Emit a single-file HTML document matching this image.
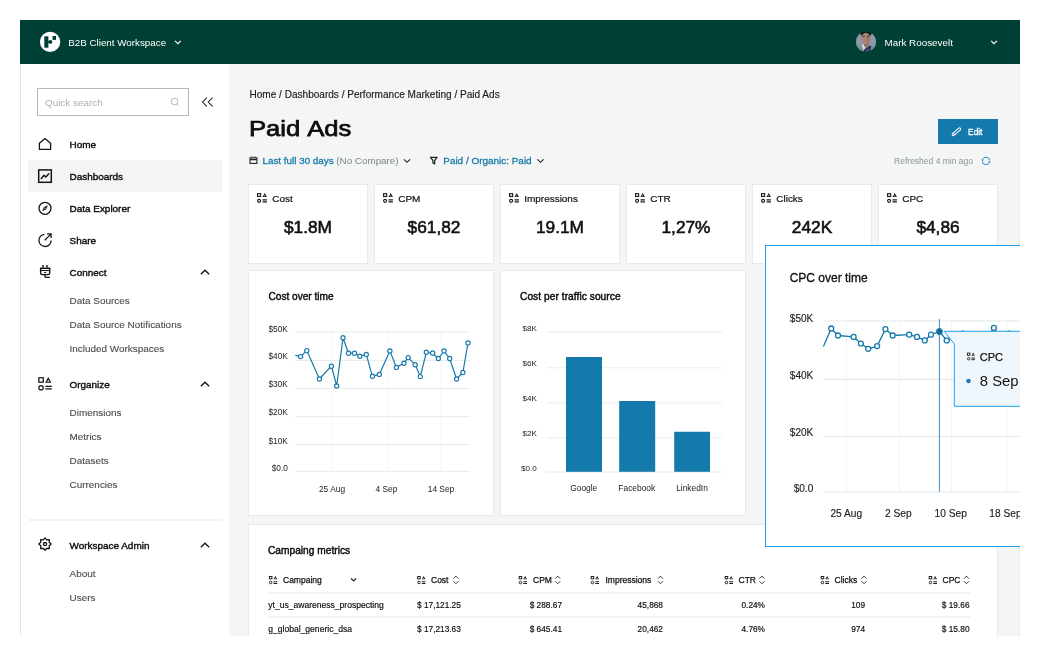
<!DOCTYPE html>
<html lang="en">
<head>
<meta charset="utf-8">
<title>Paid Ads – B2B Client Workspace</title>
<style>
html,body{margin:0;padding:0;background:#fff;}
body{width:1040px;height:656px;position:relative;overflow:hidden;font-family:"Liberation Sans",sans-serif;}
#app{position:absolute;left:0;top:0;width:1020px;height:636px;overflow:hidden;will-change:transform;}
.b{position:absolute;box-sizing:border-box;}
.t{position:absolute;white-space:pre;line-height:20px;height:20px;}
.card{position:absolute;box-sizing:border-box;background:#fff;border:1px solid #e7ebeb;}
svg{position:absolute;overflow:visible;}
</style>
</head>
<body>
<div id="app">
<!-- backgrounds -->
<div class="b" style="left:20px;top:64px;width:1000px;height:572px;background:#f4f6f6;border-right:1px solid #e8ebeb"></div>
<div class="b" style="left:20px;top:20px;width:1000px;height:44px;background:#003f33"></div>
<div class="b" style="left:20px;top:64px;width:209px;height:572px;background:#fff;border-left:1px solid #e3e7e7"></div>

<!-- header logo + avatar -->
<svg style="left:0;top:0" width="1040" height="656" viewBox="0 0 1040 656">
  <defs>
    <g id="mi" fill="none" stroke="currentColor" stroke-width="1.15">
      <rect x="0.58" y="0.58" width="3.05" height="2.8"/>
      <path d="M7.7 0 L9.95 3.95 H5.45 Z M7.7 2.05 L8.5 3.2 H6.9 Z" fill="currentColor" fill-rule="evenodd" stroke="none"/>
      <circle cx="2.1" cy="7.75" r="1.5"/>
      <path d="M5.5 6.75 H9.9 M5.5 8.85 H9.9" stroke-width="1.25"/>
    </g>
    <g id="sort" fill="none" stroke="currentColor" stroke-width="0.9">
      <path d="M0.2 3.4 L2.7 0.9 L5.2 3.4 M0.2 6 L2.7 8.5 L5.2 6"/>
    </g>
    <clipPath id="avc"><circle cx="866" cy="41.75" r="10.1"/></clipPath>
    <filter id="avb" x="-20%" y="-20%" width="140%" height="140%"><feGaussianBlur stdDeviation="0.45"/></filter>
  </defs>
  <!-- logo -->
  <circle cx="50.1" cy="41.85" r="10.2" fill="#fff"/>
  <rect x="44.3" y="36.3" width="4.1" height="11.4" fill="#003f33"/>
  <rect x="52.5" y="36" width="3.5" height="3.9" fill="#003f33"/>
  <rect x="48" y="41" width="1.6" height="1.7" fill="#003f33"/>
  <circle cx="50.4" cy="41.9" r="1.9" fill="#003f33"/>
  <path d="M175 40.9 L177.9 43.7 L180.8 40.9" fill="none" stroke="#fff" stroke-width="1.15"/>
  <!-- avatar -->
  <g clip-path="url(#avc)">
    <g filter="url(#avb)">
    <rect x="854" y="30" width="24" height="24" fill="#8c99aa"/>
    <ellipse cx="866" cy="33.6" rx="5.6" ry="3.4" fill="#10181a"/>
    <rect x="864" y="42" width="4.2" height="4.5" fill="#8c6a5c"/>
    <ellipse cx="865.9" cy="38.6" rx="4.5" ry="5.9" fill="#a9846f"/>
    <ellipse cx="868.6" cy="39.5" rx="1.6" ry="4" fill="#8f6c5b" opacity="0.55"/>
    <ellipse cx="863.7" cy="36.4" rx="1.2" ry="0.55" fill="#4b3a35"/>
    <ellipse cx="867.9" cy="36.4" rx="1.2" ry="0.55" fill="#4b3a35"/>
    <ellipse cx="866.4" cy="41.7" rx="0.9" ry="0.5" fill="#c9737c"/>
    <path d="M854 54 L856.5 47.5 L862 44.6 L866 50 L870.6 44.6 L875.8 47.5 L878 54 Z" fill="#858e99"/>
    <path d="M861.6 45 L863.6 44.2 L865.4 48.5 L863.5 50 Z" fill="#d4dde7"/>
    <path d="M864.2 49.5 L870.3 45.2 L871.2 47 L870 54 L863.6 54 Z" fill="#26314c"/>
    <path d="M866 51.5 L870 48" stroke="#dfe6ee" stroke-width="0.8" stroke-dasharray="0.9 0.9" fill="none"/>
    </g>
  </g>
  <path d="M991.1 40.9 L994 43.7 L996.9 40.9" fill="none" stroke="#fff" stroke-width="1.15"/>

  <!-- sidebar: search -->
  <rect x="37.5" y="88.5" width="151" height="27" fill="#fff" stroke="#b5b8b8" stroke-width="1"/>
  <circle cx="174.5" cy="101.5" r="3.3" fill="none" stroke="#b3b8b8" stroke-width="1"/>
  <path d="M176.9 104 L178.6 105.8" stroke="#b3b8b8" stroke-width="1" fill="none"/>
  <path d="M206.9 97.6 L202.5 102 L206.9 106.4 M212.6 97.6 L208.2 102 L212.6 106.4" fill="none" stroke="#222" stroke-width="1.05"/>

  <!-- active item bg -->
  <rect x="28" y="160" width="194" height="32" fill="#f3f5f5"/>

  <!-- nav icons -->
  <g fill="none" stroke="#151515" stroke-width="1.3" stroke-linejoin="round" stroke-linecap="round">
    <!-- home -->
    <path d="M39.4 143.2 L45 138.6 L50.6 143.2 V149.4 H39.4 Z"/>
    <!-- dashboards -->
    <rect x="38.7" y="169.9" width="12.6" height="12.4" stroke-linejoin="miter" stroke-width="1.5"/>
    <path d="M41.3 178.4 L44 175.3 L45.8 177 L48.8 173.8" stroke-width="1.5"/>
    <!-- data explorer -->
    <circle cx="45" cy="208.3" r="6"/>
    <path d="M47.5 205.8 L46 209.2 L42.5 210.8 L44 207.4 Z" fill="#151515" stroke-width="0.4"/>
    <circle cx="45" cy="208.3" r="0.55" fill="#fff" stroke="none"/>
    <!-- share -->
    <path d="M51.1 240.5 A6.1 6.1 0 1 1 44.4 234.33" stroke-linecap="butt"/>
    <path d="M44.7 240.3 L50.9 234.1 M47 233.95 H51.05 V238" stroke-linecap="butt" stroke-linejoin="miter"/>
    <!-- connect (plug) -->
    <g stroke-linecap="butt" stroke-width="1.4"><path d="M43 267.6 V265 M47 267.6 V265"/>
    <path d="M40.6 268.2 H49.7 V272.9 Q49.7 274.6 48 274.6 H42.3 Q40.6 274.6 40.6 272.9 Z"/>
    <path d="M40.6 270.5 H49.7" stroke-width="1.1"/><path d="M44 272.6 H46.2" stroke-width="1"/>
    <path d="M45 275 V276.2 Q45 277.4 46.2 277.4 H49.8"/></g>
    <!-- organize -->
    <g stroke-width="1.25"><rect x="38.85" y="377.75" width="4.4" height="4.4" stroke-linejoin="miter"/>
    <path d="M48.25 377.1 L51.35 382.8 H45.15 Z M48.25 379.8 L49.45 381.7 H47.05 Z" fill="#151515" fill-rule="evenodd" stroke="none"/>
    <circle cx="41.05" cy="387.7" r="2.2"/>
    <path d="M45.3 386.4 H51.8 M45.3 388.9 H51.8" stroke-linecap="butt" stroke-width="1.25"/></g>
    <!-- gear -->
    <path d="M45.00 537.90 L46.74 539.90 L49.38 539.72 L49.20 542.36 L51.20 544.10 L49.20 545.84 L49.38 548.48 L46.74 548.30 L45.00 550.30 L43.26 548.30 L40.62 548.48 L40.80 545.84 L38.80 544.10 L40.80 542.36 L40.62 539.72 L43.26 539.90 Z" stroke-width="1.3"/>
    <circle cx="45" cy="544.1" r="1.6" stroke-width="1.3"/>
    <!-- chevrons up -->
    <path d="M200.8 274.3 L205 270.2 L209.2 274.3 M200.8 386.3 L205 382.2 L209.2 386.3 M200.8 547.3 L205 543.2 L209.2 547.3" stroke-linecap="butt" stroke-linejoin="miter"/>
  </g>
  <rect x="28" y="519.5" width="194" height="1" fill="#e6e9e9"/>
</svg>

<div class="card" style="left:248px;top:184px;width:120px;height:80px"></div>
<div class="card" style="left:374px;top:184px;width:120px;height:80px"></div>
<div class="card" style="left:500px;top:184px;width:120px;height:80px"></div>
<div class="card" style="left:626px;top:184px;width:120px;height:80px"></div>
<div class="card" style="left:752px;top:184px;width:120px;height:80px"></div>
<div class="card" style="left:878px;top:184px;width:120px;height:80px"></div>
<div class="card" style="left:248px;top:270px;width:246px;height:246px"></div>
<div class="card" style="left:500px;top:270px;width:246px;height:246px"></div>
<div class="card" style="left:248px;top:524px;width:750px;height:140px"></div>
<div class="b" style="left:938px;top:119px;width:60px;height:25px;background:#1579ab"></div>
<svg style="left:0;top:0" width="1040" height="656" viewBox="0 0 1040 656">
<g transform="translate(956.45 131.75) rotate(-42)" fill="none" stroke="#fff" stroke-width="0.95"><rect x="-5.3" y="-1.2" width="10.6" height="2.4" rx="1.1"/><path d="M-3.3 -1.2 V1.2"/></g>
<g fill="none" stroke="#1a7fb5" stroke-width="0.95"><path d="M982.5 159.6 A3.8 3.8 0 0 1 989.8 160.6 M989.5 162.3 A3.8 3.8 0 0 1 982.2 161.3"/><path d="M981.5 159.2 L982.35 160.6 L983.8 160 M990.5 162.7 L989.65 161.3 L988.2 161.9" stroke-width="0.7"/></g>
<g fill="none" stroke="#222" stroke-width="1.1"><rect x="250" y="157.9" width="6.9" height="5.5"/><path d="M250 159.6 H256.9 M251.9 156.4 V158 M255 156.4 V158"/></g>
<path d="M403.9 159.3 L407 162.3 L410.1 159.3 M537.4 159.3 L540.5 162.3 L543.6 159.3" fill="none" stroke="#222" stroke-width="1.15"/>
<path d="M430.5 157.3 H437.1 L434.7 160.4 V163.9 L432.9 163 V160.4 Z" fill="none" stroke="#222" stroke-width="1.25" stroke-linejoin="round"/>
<use href="#mi" x="257" y="193.1" style="color:#1c1c1c"/>
<use href="#mi" x="383" y="193.1" style="color:#1c1c1c"/>
<use href="#mi" x="509" y="193.1" style="color:#1c1c1c"/>
<use href="#mi" x="635" y="193.1" style="color:#1c1c1c"/>
<use href="#mi" x="761" y="193.1" style="color:#1c1c1c"/>
<use href="#mi" x="887" y="193.1" style="color:#1c1c1c"/>
<rect x="295" y="331.5" width="175" height="1" fill="#e7ebeb"/>
<rect x="295" y="359.9" width="175" height="1" fill="#e7ebeb"/>
<rect x="295" y="387.9" width="175" height="1" fill="#e7ebeb"/>
<rect x="295" y="416.1" width="175" height="1" fill="#e7ebeb"/>
<rect x="295" y="443.9" width="175" height="1" fill="#e7ebeb"/>
<rect x="295" y="470.9" width="175" height="1" fill="#e7ebeb"/>
<path d="M332 333 V471" stroke="#e9eded" stroke-width="1" stroke-dasharray="1 1" fill="none"/>
<path d="M387.3 333 V471" stroke="#e9eded" stroke-width="1" stroke-dasharray="1 1" fill="none"/>
<path d="M441 333 V471" stroke="#e9eded" stroke-width="1" stroke-dasharray="1 1" fill="none"/>
<polyline points="295.3,355.4 300.6,356.6 306.8,350.6 319.4,379.0 331.4,366.2 336.7,386.0 343.0,337.8 348.5,353.2 354.5,353.2 359.8,356.3 366.3,354.4 372.4,376.3 379.3,374.4 389.9,351.0 396.4,367.4 403.9,363.3 408.2,357.6 415.2,364.8 420.3,376.6 426.3,352.3 432.6,353.0 438.3,358.5 444.1,351.0 449.7,358.5 456.6,379.0 462.9,372.5 468.0,342.9" fill="none" stroke="#1879ab" stroke-width="1.2" stroke-linejoin="round"/>
<circle cx="300.6" cy="356.6" r="2.1" fill="#fff" stroke="#1879ab" stroke-width="1.15"/>
<circle cx="306.8" cy="350.6" r="2.1" fill="#fff" stroke="#1879ab" stroke-width="1.15"/>
<circle cx="319.4" cy="379.0" r="2.1" fill="#fff" stroke="#1879ab" stroke-width="1.15"/>
<circle cx="331.4" cy="366.2" r="2.1" fill="#fff" stroke="#1879ab" stroke-width="1.15"/>
<circle cx="336.7" cy="386.0" r="2.1" fill="#fff" stroke="#1879ab" stroke-width="1.15"/>
<circle cx="343.0" cy="337.8" r="2.1" fill="#fff" stroke="#1879ab" stroke-width="1.15"/>
<circle cx="348.5" cy="353.2" r="2.1" fill="#fff" stroke="#1879ab" stroke-width="1.15"/>
<circle cx="354.5" cy="353.2" r="2.1" fill="#fff" stroke="#1879ab" stroke-width="1.15"/>
<circle cx="359.8" cy="356.3" r="2.1" fill="#fff" stroke="#1879ab" stroke-width="1.15"/>
<circle cx="366.3" cy="354.4" r="2.1" fill="#fff" stroke="#1879ab" stroke-width="1.15"/>
<circle cx="372.4" cy="376.3" r="2.1" fill="#fff" stroke="#1879ab" stroke-width="1.15"/>
<circle cx="379.3" cy="374.4" r="2.1" fill="#fff" stroke="#1879ab" stroke-width="1.15"/>
<circle cx="389.9" cy="351.0" r="2.1" fill="#fff" stroke="#1879ab" stroke-width="1.15"/>
<circle cx="396.4" cy="367.4" r="2.1" fill="#fff" stroke="#1879ab" stroke-width="1.15"/>
<circle cx="403.9" cy="363.3" r="2.1" fill="#fff" stroke="#1879ab" stroke-width="1.15"/>
<circle cx="408.2" cy="357.6" r="2.1" fill="#fff" stroke="#1879ab" stroke-width="1.15"/>
<circle cx="415.2" cy="364.8" r="2.1" fill="#fff" stroke="#1879ab" stroke-width="1.15"/>
<circle cx="420.3" cy="376.6" r="2.1" fill="#fff" stroke="#1879ab" stroke-width="1.15"/>
<circle cx="426.3" cy="352.3" r="2.1" fill="#fff" stroke="#1879ab" stroke-width="1.15"/>
<circle cx="432.6" cy="353.0" r="2.1" fill="#fff" stroke="#1879ab" stroke-width="1.15"/>
<circle cx="438.3" cy="358.5" r="2.1" fill="#fff" stroke="#1879ab" stroke-width="1.15"/>
<circle cx="444.1" cy="351.0" r="2.1" fill="#fff" stroke="#1879ab" stroke-width="1.15"/>
<circle cx="449.7" cy="358.5" r="2.1" fill="#fff" stroke="#1879ab" stroke-width="1.15"/>
<circle cx="456.6" cy="379.0" r="2.1" fill="#fff" stroke="#1879ab" stroke-width="1.15"/>
<circle cx="462.9" cy="372.5" r="2.1" fill="#fff" stroke="#1879ab" stroke-width="1.15"/>
<circle cx="468.0" cy="342.9" r="2.1" fill="#fff" stroke="#1879ab" stroke-width="1.15"/>
<rect x="547" y="330.9" width="175" height="1.6" fill="#f1f3f3"/>
<rect x="547" y="366.9" width="175" height="1.6" fill="#f1f3f3"/>
<rect x="547" y="401.9" width="175" height="1.6" fill="#f1f3f3"/>
<rect x="547" y="436.95" width="175" height="1.6" fill="#f1f3f3"/>
<rect x="547" y="471.2" width="175" height="1.6" fill="#f1f3f3"/>
<rect x="566" y="357" width="36" height="114.80000000000001" fill="#147aab"/>
<rect x="619.2" y="401" width="36.0" height="70.80000000000001" fill="#147aab"/>
<rect x="674.2" y="431.75" width="35.799999999999955" height="40.05000000000001" fill="#147aab"/>
<rect x="268" y="592.5" width="702" height="1" fill="#e6eaea"/>
<rect x="268" y="616.5" width="702" height="1" fill="#e6eaea"/>
<use href="#mi" x="268.9" y="576" transform="translate(43.02 92.16) scale(0.84)" style="color:#1c1c1c"/>
<use href="#mi" x="417.2" y="576" transform="translate(66.75 92.16) scale(0.84)" style="color:#1c1c1c"/>
<use href="#mi" x="518.7" y="576" transform="translate(82.99 92.16) scale(0.84)" style="color:#1c1c1c"/>
<use href="#mi" x="590.7" y="576" transform="translate(94.51 92.16) scale(0.84)" style="color:#1c1c1c"/>
<use href="#mi" x="724.7" y="576" transform="translate(115.95 92.16) scale(0.84)" style="color:#1c1c1c"/>
<use href="#mi" x="820.7" y="576" transform="translate(131.31 92.16) scale(0.84)" style="color:#1c1c1c"/>
<use href="#mi" x="928.7" y="576" transform="translate(148.59 92.16) scale(0.84)" style="color:#1c1c1c"/>
<use href="#sort" x="453.2" y="575.2" style="color:#222"/>
<use href="#sort" x="555.0" y="575.2" style="color:#222"/>
<use href="#sort" x="657.8" y="575.2" style="color:#222"/>
<use href="#sort" x="759.3" y="575.2" style="color:#222"/>
<use href="#sort" x="861.3" y="575.2" style="color:#222"/>
<use href="#sort" x="963.8" y="575.2" style="color:#222"/>
<path d="M351 578.4 L353.6 581 L356.2 578.4" fill="none" stroke="#222" stroke-width="1.2"/>
</svg>

<span class="t" style="left:68.25px;top:32.6px;font-size:9.8px;color:#ffffff;">B2B Client Workspace</span>
<span class="t" style="left:884.5px;top:32.8px;font-size:9.85px;color:#ffffff;">Mark Roosevelt</span>
<span class="t" style="left:45px;top:92.6px;font-size:9.9px;color:#a9aeae;">Quick search</span>
<span class="t" style="left:69.5px;top:134.6px;font-size:9.95px;color:#0c0c0c;-webkit-text-stroke:0.38px #0c0c0c;">Home</span>
<span class="t" style="left:69.5px;top:166.7px;font-size:9.95px;color:#0c0c0c;-webkit-text-stroke:0.38px #0c0c0c;">Dashboards</span>
<span class="t" style="left:69.5px;top:198.6px;font-size:9.95px;color:#0c0c0c;-webkit-text-stroke:0.38px #0c0c0c;">Data Explorer</span>
<span class="t" style="left:69.5px;top:230.6px;font-size:9.95px;color:#0c0c0c;-webkit-text-stroke:0.38px #0c0c0c;">Share</span>
<span class="t" style="left:69.5px;top:262.6px;font-size:9.95px;color:#0c0c0c;-webkit-text-stroke:0.38px #0c0c0c;">Connect</span>
<span class="t" style="left:69.5px;top:290.7px;font-size:9.95px;color:#494e4e;-webkit-text-stroke:0.12px #494e4e;">Data Sources</span>
<span class="t" style="left:69.5px;top:314.7px;font-size:9.95px;color:#494e4e;-webkit-text-stroke:0.12px #494e4e;">Data Source Notifications</span>
<span class="t" style="left:69.5px;top:338.7px;font-size:9.95px;color:#494e4e;-webkit-text-stroke:0.12px #494e4e;">Included Workspaces</span>
<span class="t" style="left:69.5px;top:374.6px;font-size:9.95px;color:#0c0c0c;-webkit-text-stroke:0.38px #0c0c0c;">Organize</span>
<span class="t" style="left:69.5px;top:402.6px;font-size:9.95px;color:#494e4e;-webkit-text-stroke:0.12px #494e4e;">Dimensions</span>
<span class="t" style="left:69.5px;top:426.7px;font-size:9.95px;color:#494e4e;-webkit-text-stroke:0.12px #494e4e;">Metrics</span>
<span class="t" style="left:69.5px;top:450.7px;font-size:9.95px;color:#494e4e;-webkit-text-stroke:0.12px #494e4e;">Datasets</span>
<span class="t" style="left:69.5px;top:474.5px;font-size:9.95px;color:#494e4e;-webkit-text-stroke:0.12px #494e4e;">Currencies</span>
<span class="t" style="left:69.5px;top:535.6px;font-size:9.95px;color:#0c0c0c;-webkit-text-stroke:0.38px #0c0c0c;">Workspace Admin</span>
<span class="t" style="left:69.5px;top:563.5px;font-size:9.95px;color:#494e4e;-webkit-text-stroke:0.12px #494e4e;">About</span>
<span class="t" style="left:69.5px;top:587.5px;font-size:9.95px;color:#494e4e;-webkit-text-stroke:0.12px #494e4e;">Users</span>
<span class="t" style="left:249.5px;top:85.3px;font-size:10.05px;color:#1a1a1a;-webkit-text-stroke:0.15px #1a1a1a;">Home / Dashboards / Performance Marketing / Paid Ads</span>
<span class="t" style="left:248.7px;top:119.1px;font-size:21.9px;color:#0d0d0d;-webkit-text-stroke:0.75px #0d0d0d;transform:scaleX(1.17);transform-origin:0 50%;word-spacing:1px;">Paid Ads</span>
<span class="t" style="left:262.5px;top:150.6px;font-size:9.85px;color:#1878a9;-webkit-text-stroke:0.3px #1878a9;">Last full 30 days</span>
<span class="t" style="left:336.25px;top:150.6px;font-size:9.85px;color:#7d8383;">(No Compare)</span>
<span class="t" style="left:443.25px;top:150.6px;font-size:9.95px;color:#1878a9;-webkit-text-stroke:0.3px #1878a9;">Paid / Organic: Paid</span>
<span class="t" style="left:968.1px;top:121.5px;font-size:8.3px;color:#ffffff;-webkit-text-stroke:0.3px #fff;">Edit</span>
<span class="t" style="right:47px;top:151.3px;font-size:8.5px;color:#8d9393;">Refreshed 4 min ago</span>
<span class="t" style="left:272.3px;top:188.6px;font-size:9.95px;color:#111;-webkit-text-stroke:0.2px #111;">Cost</span>
<span class="t" style="left:208px;width:200px;text-align:center;top:217.25px;font-size:17.3px;color:#111;-webkit-text-stroke:0.6px #111;">$1.8M</span>
<span class="t" style="left:398.3px;top:188.6px;font-size:9.95px;color:#111;-webkit-text-stroke:0.2px #111;">CPM</span>
<span class="t" style="left:334px;width:200px;text-align:center;top:217.25px;font-size:17.3px;color:#111;-webkit-text-stroke:0.6px #111;">$61,82</span>
<span class="t" style="left:524.3px;top:188.6px;font-size:9.95px;color:#111;-webkit-text-stroke:0.2px #111;">Impressions</span>
<span class="t" style="left:460px;width:200px;text-align:center;top:217.25px;font-size:17.3px;color:#111;-webkit-text-stroke:0.6px #111;">19.1M</span>
<span class="t" style="left:650.3px;top:188.6px;font-size:9.95px;color:#111;-webkit-text-stroke:0.2px #111;">CTR</span>
<span class="t" style="left:586px;width:200px;text-align:center;top:217.25px;font-size:17.3px;color:#111;-webkit-text-stroke:0.6px #111;">1,27%</span>
<span class="t" style="left:776.3px;top:188.6px;font-size:9.95px;color:#111;-webkit-text-stroke:0.2px #111;">Clicks</span>
<span class="t" style="left:712px;width:200px;text-align:center;top:217.25px;font-size:17.3px;color:#111;-webkit-text-stroke:0.6px #111;">242K</span>
<span class="t" style="left:902.3px;top:188.6px;font-size:9.95px;color:#111;-webkit-text-stroke:0.2px #111;">CPC</span>
<span class="t" style="left:838px;width:200px;text-align:center;top:217.25px;font-size:17.3px;color:#111;-webkit-text-stroke:0.6px #111;">$4,86</span>
<span class="t" style="left:268.5px;top:286.9px;font-size:10.1px;color:#0c0c0c;-webkit-text-stroke:0.42px #0c0c0c;">Cost over time</span>
<span class="t" style="left:520px;top:286.8px;font-size:10.2px;color:#0c0c0c;-webkit-text-stroke:0.42px #0c0c0c;letter-spacing:0.05px;">Cost per traffic source</span>
<span class="t" style="left:268px;top:540.8px;font-size:10.2px;color:#0c0c0c;-webkit-text-stroke:0.42px #0c0c0c;">Campaing metrics</span>
<span class="t" style="right:732.2px;top:319.4px;font-size:8.3px;color:#222;">$50K</span>
<span class="t" style="right:732.2px;top:346.4px;font-size:8.3px;color:#222;">$40K</span>
<span class="t" style="right:732.2px;top:374.1px;font-size:8.3px;color:#222;">$30K</span>
<span class="t" style="right:732.2px;top:402.1px;font-size:8.3px;color:#222;">$20K</span>
<span class="t" style="right:732.2px;top:430.7px;font-size:8.3px;color:#222;">$10K</span>
<span class="t" style="right:732.2px;top:458.4px;font-size:8.3px;color:#222;">$0.0</span>
<span class="t" style="left:232px;width:200px;text-align:center;top:478.5px;font-size:8.4px;color:#222;">25 Aug</span>
<span class="t" style="left:286.5px;width:200px;text-align:center;top:478.5px;font-size:8.4px;color:#222;">4 Sep</span>
<span class="t" style="left:341px;width:200px;text-align:center;top:478.5px;font-size:8.4px;color:#222;">14 Sep</span>
<span class="t" style="right:483.2px;top:319.0px;font-size:8.1px;color:#222;">$8K</span>
<span class="t" style="right:483.2px;top:354.0px;font-size:8.1px;color:#222;">$6K</span>
<span class="t" style="right:483.2px;top:389.0px;font-size:8.1px;color:#222;">$4K</span>
<span class="t" style="right:483.2px;top:423.8px;font-size:8.1px;color:#222;">$2K</span>
<span class="t" style="right:483.2px;top:458.8px;font-size:8.1px;color:#222;">$0.0</span>
<span class="t" style="left:483.75px;width:200px;text-align:center;top:478.0px;font-size:8.4px;color:#222;">Google</span>
<span class="t" style="left:536.75px;width:200px;text-align:center;top:478.0px;font-size:8.4px;color:#222;">Facebook</span>
<span class="t" style="left:592px;width:200px;text-align:center;top:478.0px;font-size:8.4px;color:#222;">LinkedIn</span>
<span class="t" style="left:283px;top:570.0px;font-size:8.5px;color:#111;-webkit-text-stroke:0.25px #111;">Campaing</span>
<span class="t" style="left:431px;top:570.0px;font-size:8.5px;color:#111;-webkit-text-stroke:0.25px #111;">Cost</span>
<span class="t" style="left:533px;top:570.0px;font-size:8.5px;color:#111;-webkit-text-stroke:0.25px #111;">CPM</span>
<span class="t" style="left:605.5px;top:570.0px;font-size:8.5px;color:#111;-webkit-text-stroke:0.25px #111;">Impressions</span>
<span class="t" style="left:738.5px;top:570.0px;font-size:8.5px;color:#111;-webkit-text-stroke:0.25px #111;">CTR</span>
<span class="t" style="left:834.5px;top:570.0px;font-size:8.5px;color:#111;-webkit-text-stroke:0.25px #111;">Clicks</span>
<span class="t" style="left:942.5px;top:570.0px;font-size:8.5px;color:#111;-webkit-text-stroke:0.25px #111;">CPC</span>
<span class="t" style="left:268.3px;top:595.0px;font-size:8.55px;color:#111;-webkit-text-stroke:0.18px #111;">yt_us_awareness_prospecting</span>
<span class="t" style="left:417px;top:595.0px;font-size:8.3px;color:#111;-webkit-text-stroke:0.18px #111;">$ 17,121.25</span>
<span class="t" style="right:458px;top:595.0px;font-size:8.3px;color:#111;-webkit-text-stroke:0.18px #111;">$ 288.67</span>
<span class="t" style="right:357px;top:595.0px;font-size:8.3px;color:#111;-webkit-text-stroke:0.18px #111;">45,868</span>
<span class="t" style="right:255px;top:595.0px;font-size:8.3px;color:#111;-webkit-text-stroke:0.18px #111;">0.24%</span>
<span class="t" style="right:155px;top:595.0px;font-size:8.3px;color:#111;-webkit-text-stroke:0.18px #111;">109</span>
<span class="t" style="right:50.5px;top:595.0px;font-size:8.3px;color:#111;-webkit-text-stroke:0.18px #111;">$ 19.66</span>
<span class="t" style="left:268.3px;top:619.1px;font-size:8.55px;color:#111;-webkit-text-stroke:0.18px #111;">g_global_generic_dsa</span>
<span class="t" style="left:417px;top:619.1px;font-size:8.3px;color:#111;-webkit-text-stroke:0.18px #111;">$ 17,213.63</span>
<span class="t" style="right:458px;top:619.1px;font-size:8.3px;color:#111;-webkit-text-stroke:0.18px #111;">$ 645.41</span>
<span class="t" style="right:357px;top:619.1px;font-size:8.3px;color:#111;-webkit-text-stroke:0.18px #111;">20,462</span>
<span class="t" style="right:255px;top:619.1px;font-size:8.3px;color:#111;-webkit-text-stroke:0.18px #111;">4.76%</span>
<span class="t" style="right:155px;top:619.1px;font-size:8.3px;color:#111;-webkit-text-stroke:0.18px #111;">974</span>
<span class="t" style="right:50.5px;top:619.1px;font-size:8.3px;color:#111;-webkit-text-stroke:0.18px #111;">$ 15.80</span>

<div class="b" style="left:765px;top:245px;width:280px;height:302px;background:#fff;border:1px solid #219fec"></div>
<svg style="left:0;top:0" width="1040" height="656" viewBox="0 0 1040 656">
<rect x="823" y="320.5" width="200" height="1" fill="#e2e7e7"/>
<rect x="823" y="378.7" width="200" height="1" fill="#e2e7e7"/>
<rect x="823" y="435.9" width="200" height="1" fill="#e2e7e7"/>
<rect x="823" y="491.7" width="200" height="1" fill="#e2e7e7"/>
<path d="M846.3 322 V492" stroke="#e4e8e8" stroke-width="1" stroke-dasharray="1 1" fill="none"/>
<path d="M899.5 322 V492" stroke="#e4e8e8" stroke-width="1" stroke-dasharray="1 1" fill="none"/>
<path d="M951.5 322 V492" stroke="#e4e8e8" stroke-width="1" stroke-dasharray="1 1" fill="none"/>
<path d="M1006.8 322 V492" stroke="#e4e8e8" stroke-width="1" stroke-dasharray="1 1" fill="none"/>
<polyline points="823.4,346.6 831.2,328.5 838.0,335.5 853.6,336.9 860.9,343.6 868.2,348.8 877.1,346.1 885.4,329.1 892.7,335.5 909.2,334.7 917.0,336.9 924.8,340.4 931.0,334.7 939.4,331.5 946.7,340.4 954.5,338 962.8,333.7 970.5,339 978.3,342 986,340 993.9,327.9 1001.6,341 1009.3,333.7 1017,338 1025,336" fill="none" stroke="#1879ab" stroke-width="1.3" stroke-linejoin="round"/>
<path d="M939.4 319 V491.7" stroke="#3b8dbb" stroke-width="1" fill="none"/>
<circle cx="831.2" cy="328.5" r="2.5" fill="#fff" stroke="#1879ab" stroke-width="1.3"/>
<circle cx="838.0" cy="335.5" r="2.5" fill="#fff" stroke="#1879ab" stroke-width="1.3"/>
<circle cx="853.6" cy="336.9" r="2.5" fill="#fff" stroke="#1879ab" stroke-width="1.3"/>
<circle cx="860.9" cy="343.6" r="2.5" fill="#fff" stroke="#1879ab" stroke-width="1.3"/>
<circle cx="868.2" cy="348.8" r="2.5" fill="#fff" stroke="#1879ab" stroke-width="1.3"/>
<circle cx="877.1" cy="346.1" r="2.5" fill="#fff" stroke="#1879ab" stroke-width="1.3"/>
<circle cx="885.4" cy="329.1" r="2.5" fill="#fff" stroke="#1879ab" stroke-width="1.3"/>
<circle cx="892.7" cy="335.5" r="2.5" fill="#fff" stroke="#1879ab" stroke-width="1.3"/>
<circle cx="909.2" cy="334.7" r="2.5" fill="#fff" stroke="#1879ab" stroke-width="1.3"/>
<circle cx="917.0" cy="336.9" r="2.5" fill="#fff" stroke="#1879ab" stroke-width="1.3"/>
<circle cx="924.8" cy="340.4" r="2.5" fill="#fff" stroke="#1879ab" stroke-width="1.3"/>
<circle cx="931.0" cy="334.7" r="2.5" fill="#fff" stroke="#1879ab" stroke-width="1.3"/>
<circle cx="939.4" cy="331.5" r="3" fill="#17679a" stroke="#1879ab" stroke-width="1"/>
<circle cx="946.7" cy="340.4" r="2.5" fill="#fff" stroke="#1879ab" stroke-width="1.3"/>
<circle cx="954.5" cy="338" r="2.5" fill="#fff" stroke="#1879ab" stroke-width="1.3"/>
<circle cx="962.8" cy="333.7" r="2.5" fill="#fff" stroke="#1879ab" stroke-width="1.3"/>
<circle cx="970.5" cy="339" r="2.5" fill="#fff" stroke="#1879ab" stroke-width="1.3"/>
<circle cx="978.3" cy="342" r="2.5" fill="#fff" stroke="#1879ab" stroke-width="1.3"/>
<circle cx="986" cy="340" r="2.5" fill="#fff" stroke="#1879ab" stroke-width="1.3"/>
<circle cx="993.9" cy="327.9" r="2.5" fill="#fff" stroke="#1879ab" stroke-width="1.3"/>
<circle cx="1001.6" cy="341" r="2.5" fill="#fff" stroke="#1879ab" stroke-width="1.3"/>
<circle cx="1009.3" cy="333.7" r="2.5" fill="#fff" stroke="#1879ab" stroke-width="1.3"/>
<circle cx="1017" cy="338" r="2.5" fill="#fff" stroke="#1879ab" stroke-width="1.3"/>
<circle cx="1025" cy="336" r="2.5" fill="#fff" stroke="#1879ab" stroke-width="1.3"/>
<path d="M944.2 331.3 H1030 V406.3 H954.3 V344 Z" fill="#eff7fd" stroke="#219fec" stroke-width="1"/>
<use href="#mi" x="967" y="352.6" transform="translate(193.4 70.52) scale(0.8)" style="color:#222"/>
<circle cx="968.5" cy="381" r="2.3" fill="#1a7fb5"/>
</svg>
<span class="t" style="left:789.7px;top:267.8px;font-size:12.0px;color:#111;-webkit-text-stroke:0.3px #111;">CPC over time</span>
<span class="t" style="right:206.8px;top:309.1px;font-size:10.0px;color:#222;-webkit-text-stroke:0.15px #222;">$50K</span>
<span class="t" style="right:206.8px;top:365.8px;font-size:10.0px;color:#222;-webkit-text-stroke:0.15px #222;">$40K</span>
<span class="t" style="right:206.8px;top:422.6px;font-size:10.0px;color:#222;-webkit-text-stroke:0.15px #222;">$20K</span>
<span class="t" style="right:206.8px;top:479.4px;font-size:10.0px;color:#222;-webkit-text-stroke:0.15px #222;">$0.0</span>
<span class="t" style="left:746.3px;width:200px;text-align:center;top:503.5px;font-size:10.2px;color:#222;-webkit-text-stroke:0.15px #222;">25 Aug</span>
<span class="t" style="left:798.4px;width:200px;text-align:center;top:503.5px;font-size:10.2px;color:#222;-webkit-text-stroke:0.15px #222;">2 Sep</span>
<span class="t" style="left:850.7px;width:200px;text-align:center;top:503.5px;font-size:10.2px;color:#222;-webkit-text-stroke:0.15px #222;">10 Sep</span>
<span class="t" style="left:905.5px;width:200px;text-align:center;top:503.5px;font-size:10.2px;color:#222;-webkit-text-stroke:0.15px #222;">18 Sep</span>
<span class="t" style="left:979.8px;top:346.6px;font-size:11.0px;color:#111;-webkit-text-stroke:0.25px #111;">CPC</span>
<span class="t" style="left:979.8px;top:371.0px;font-size:14.8px;color:#111;">8 Sep</span>
</div>
</body>
</html>
